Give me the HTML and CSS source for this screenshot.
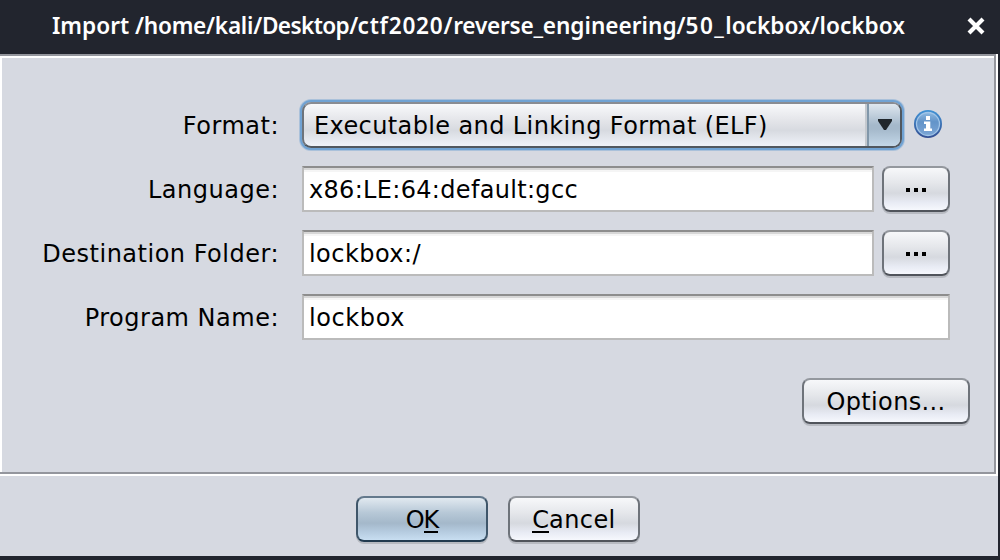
FILE: index.html
```html
<!DOCTYPE html>
<html lang="en">
<head>
<meta charset="utf-8">
<title>Import</title>
<link rel="stylesheet" href="styles.css">
</head>
<body>
<div class="window">
  <header class="titlebar">
    <span class="title">Import <span class="snug">/home/kali/</span><span class="tight">Desktop/</span><span class="wide">ctf2020/</span><span class="snug">reverse_</span>engineering/<span class="wider">50_</span>lockbox/lockbox</span>
    <svg class="close" width="20" height="20" viewBox="0 0 20 20"><path d="M3 3 17 17M17 3 3 17" stroke="#fff" stroke-width="4.2" fill="none"/></svg>
  </header>
  <main class="panel">
    <div class="form">
      <label class="label">Format:</label>
      <div class="row">
        <div class="combo">
          <span class="combo-text">Executable and Linking Format (ELF)</span>
          <span class="combo-arrow"><svg width="14" height="12" viewBox="0 0 14 12"><path d="M0 0H14V2L8 11H6L0 2Z" fill="#20262b"/></svg></span>
        </div>
        <svg class="info" width="28" height="28" viewBox="0 0 28 28">
          <defs><linearGradient id="ring" x2="0" y2="1"><stop stop-color="#4193d5"/><stop offset="1" stop-color="#344f93"/></linearGradient>
          <linearGradient id="disc" x2="0" y2="1"><stop stop-color="#8cb8df"/><stop offset=".4" stop-color="#6394c9"/><stop offset="1" stop-color="#7ba5d5"/></linearGradient></defs>
          <circle cx="14" cy="14" r="14" fill="url(#ring)"/>
          <circle cx="14" cy="14" r="11.5" fill="url(#disc)" stroke="#a1c5e8" stroke-width="1.3"/>
          <path d="M12 6h4v4h-4zM10 11.5h6.3v7h1.7v2.5h-8v-2.5h2v-4.5h-2z" fill="#fff"/>
        </svg>
      </div>
      <label class="label">Language:</label>
      <div class="row"><div class="field language">x86:LE:64:default:gcc</div><div class="button browse"><i></i><i></i><i></i></div></div>
      <label class="label">Destination Folder:</label>
      <div class="row"><div class="field">lockbox:/</div><div class="button browse"><i></i><i></i><i></i></div></div>
      <label class="label">Program Name:</label>
      <div class="row"><div class="field name">lockbox</div></div>
    </div>
    <div class="options-row"><div class="button options">Options...</div></div>
  </main>
  <footer class="footer">
    <div class="button ok"><span>O<span class="key">K</span></span></div>
    <div class="button cancel"><span><span class="key">C</span>ancel</span></div>
  </footer>
</div>
</body>
</html>
```
FILE: styles.css
```css
* { box-sizing: border-box; }
body { margin: 0; background: #22252e; }
.window {
  width: 1000px;
  height: 560px;
  display: flex;
  flex-direction: column;
  background: #22252e;
  color: #000;
  font: 24px/28px "DejaVu Sans", sans-serif;
  letter-spacing: .45px;
  overflow: hidden;
  white-space: nowrap;
}
.titlebar {
  height: 54px;
  display: flex;
  align-items: center;
  justify-content: space-between;
  padding: 0 14px 2px 52px;
  color: #fff;
}
.title {
  font: 600 24px/32px "Noto Sans", sans-serif;
  letter-spacing: 0;
  transform: translateY(-1px) scaleX(.942);
  transform-origin: left center;
}
.snug { letter-spacing: -.27px; }
.tight { letter-spacing: -.65px; }
.wide { letter-spacing: .8px; }
.wider { letter-spacing: 1.5px; }
.close { flex: none; }
.panel {
  width: 998px;
  height: 422px;
  padding: 46px 0 0 2px;
  background: #d6d9e1;
  box-shadow: inset 0 -2px #fff, inset -2px 0 #fff, inset 0 2px #94969d, inset -4px 0 #94969d, inset 0 -4px #94969d, inset 0 4px #fff, inset 2px 0 #fff;
}
.form {
  display: grid;
  grid-template-columns: 277px 648px;
  grid-auto-rows: 46px;
  row-gap: 18px;
  column-gap: 23px;
  padding-top: 2px;
}
.label { text-align: right; padding-top: 10px; letter-spacing: .5px; }
.row { display: flex; gap: 8px; }
.combo {
  width: 600px;
  height: 46px;
  display: flex;
  border: 2px solid;
  border-color: #898c93 #50575f #50575f #6d737b;
  border-radius: 9px;
  background: linear-gradient(#f8f9fb, #e6e7eb 35%, #d7dae0 63%, #eff2f9);
  box-shadow: 0 0 0 2px #70a2d3, 0 0 0 3px #aac1da;
  overflow: hidden;
}
.combo-text { flex: 1; padding: 8px 0 0 10px; letter-spacing: .39px; }
.combo-arrow {
  width: 33px;
  display: flex;
  align-items: center;
  justify-content: center;
  border-left: 2px solid #8197aa;
  background: linear-gradient(#dfe7ef, #a5b9cb 50%, #a5b9cb 60%, #c3d7e8);
  box-shadow: -2px 0 #c4c9cf;
}
.info { margin: 8px 0 0 4px; }
.field {
  width: 572px;
  height: 46px;
  padding: 8px 0 0 5px;
  background: #fff;
  border: 2px solid #bbb;
  border-top-color: #8d8d8d;
  box-shadow: inset 0 2px #d7d7d7, inset 0 4px #f5f5f5;
}
.language { letter-spacing: .32px; }
.name { width: 648px; letter-spacing: .6px; }
.button {
  height: 46px;
  display: flex;
  align-items: center;
  justify-content: center;
  border: 2px solid;
  border-color: #94989e #6e737a #50545b #6e737a;
  border-radius: 8px;
  background: linear-gradient(#f7f8fa, #e5e7eb 35%, #d6d9df 60%, #e8ebf4 82%, #f6f8fd);
  box-shadow: 0 2px #b7bac1;
}
.browse { width: 68px; gap: 4px; }
.browse i { width: 4px; height: 4px; background: #000; margin-top: 2px; }
.options-row { display: flex; justify-content: flex-end; padding: 38px 28px 0 0; }
.options { width: 168px; padding-top: 2px; letter-spacing: .35px; }
.footer {
  width: 998px;
  height: 80px;
  display: flex;
  gap: 20px;
  padding: 20px 0 0 356px;
  background: #d6d9e1;
}
.ok, .cancel { width: 132px; padding-top: 2px; }
.cancel { letter-spacing: .4px; }
.ok {
  letter-spacing: -1px;
  border-color: #64798c #3f566a #213a4f #3f566a;
  background: linear-gradient(#e1e9f0, #b7c8d7 35%, #a4b8ca 60%, #b7cde1 82%, #c8def1);
}
.key { display: inline-block; height: 27px; letter-spacing: 0; border-bottom: 2px solid #000; line-height: 28px; }
.ok .key { letter-spacing: -1px; }
```
